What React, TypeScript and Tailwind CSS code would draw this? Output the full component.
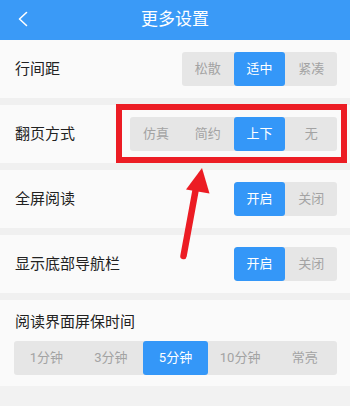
import React from "react";

const font = { fontFamily: "Roboto, 'Noto Sans CJK SC', sans-serif" };

function Seg({ items, active, w }: { items: string[]; active: number; w?: string }) {
  return (
    <div className={`flex rounded-[3px] overflow-hidden bg-[#e6e6e6] ${w ?? ""}`}>
      {items.map((t, i) => (
        <div
          key={t}
          className={`${w ? "flex-1" : "w-[51.7px]"} h-[34px] flex items-center justify-center text-[13px] rounded-[3px] ${
            i === active ? "bg-[#3497f8] text-white" : "text-[#a3a3a3]"
          }`}
        >
          {t}
        </div>
      ))}
    </div>
  );
}

function Row({ label, items, active }: { label: string; items: string[]; active: number }) {
  return (
    <div className="h-[58px] bg-[#fafafa] flex items-center justify-between pl-[15px] pr-[13px]">
      <span className="text-[15px] text-[#222]">{label}</span>
      <Seg items={items} active={active} />
    </div>
  );
}

const Sep = () => <div className="h-[7px] bg-[#f0f0f0]" />;

export default function App() {
  return (
    <div className="w-[350px] h-[406px] bg-[#f2f2f2] relative overflow-hidden" style={font}>
      <div className="h-[40px] bg-[#3a9af7] flex items-center justify-center relative">
        <svg className="absolute left-[16px] top-[10px]" width="14" height="18" viewBox="0 0 14 18">
          <path d="M10.5 2.5 L3.5 9 L10.5 15.5" fill="none" stroke="white" strokeWidth="1.6" strokeLinecap="round" strokeLinejoin="round" />
        </svg>
        <span className="text-white text-[17px]">更多设置</span>
      </div>
      <Row label="行间距" items={["松散", "适中", "紧凑"]} active={1} />
      <Sep />
      <Row label="翻页方式" items={["仿真", "简约", "上下", "无"]} active={2} />
      <Sep />
      <Row label="全屏阅读" items={["开启", "关闭"]} active={0} />
      <Sep />
      <Row label="显示底部导航栏" items={["开启", "关闭"]} active={0} />
      <Sep />
      <div className="h-[86px] bg-[#fafafa] pl-[14px] pr-[13px] pt-[11px] flex flex-col">
        <span className="text-[15px] text-[#222] leading-[22px] pl-px">阅读界面屏保时间</span>
        <div className="mt-[8px]">
          <Seg items={["1分钟", "3分钟", "5分钟", "10分钟", "常亮"]} active={2} w="w-full" />
        </div>
      </div>

      <div className="absolute left-[116px] top-[104px] w-[231px] h-[59px] border-[6px] border-[#ec1c24]" />
      <svg className="absolute left-0 top-0" width="350" height="406" viewBox="0 0 350 406">
        <line x1="183.5" y1="256" x2="196" y2="188" stroke="#ec1c24" strokeWidth="6.5" strokeLinecap="round" />
        <polygon points="202,168 186,189.5 209.5,193.5" fill="#ec1c24" />
      </svg>
    </div>
  );
}
